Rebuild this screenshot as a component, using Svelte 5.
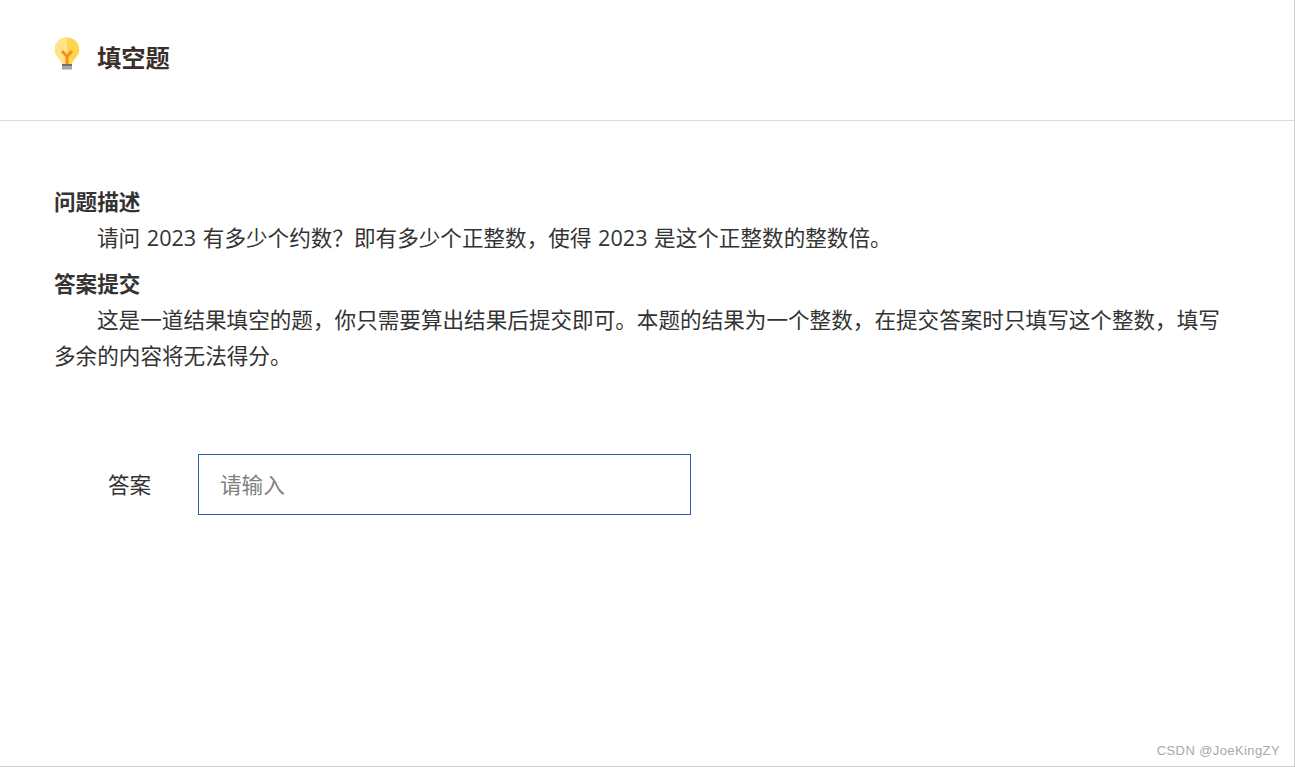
<script>
  let answer = $state("");
</script>

<div class="page">
  <header class="head">
    <svg class="bulb" width="26" height="36" viewBox="0 0 26 36" aria-hidden="true">
      <path d="M13 .5C6 .5.8 5.800.8 12.600c0 4.200 2.200 7.200 4.600 9.600 1.400 1.400 2.400 2.800 2.600 4.800h10c.2-2 1.200-3.400 2.600-4.800 2.400-2.400 4.600-5.400 4.600-9.600C25.200 5.800 20 .5 13 .5z" fill="#ffd54f"/>
      <path d="M13 .5C6 .5.8 5.800.8 12.600c0 4.200 2.200 7.200 4.600 9.600 1.400 1.400 2.400 2.800 2.600 4.800h5z" fill="#ffe28a"/>
      <path d="M8 14l5 5.500 5-5.500M13 19v8" fill="none" stroke="#fb8c1a" stroke-width="3"/>
      <rect x="8" y="27" width="10" height="2.500" fill="#6e6e6e"/>
      <rect x="8" y="29.500" width="10" height="3" fill="#a3a3a3"/>
    </svg>
    <h1>填空题</h1>
  </header>

  <main class="body">
    <section class="problem">
      <h2>问题描述</h2>
      <p>请问 2023 有多少个约数？即有多少个正整数，使得 2023 是这个正整数的整数倍。</p>
      <h2 class="second">答案提交</h2>
      <p>这是一道结果填空的题，你只需要算出结果后提交即可。本题的结果为一个整数，在提交答案时只填写这个整数，填写多余的内容将无法得分。</p>
    </section>

    <form class="answer">
      <label for="answer">答案</label>
      <input id="answer" placeholder="请输入" bind:value={answer} />
    </form>
  </main>

  <span class="mark">CSDN @JoeKingZY</span>
</div>

<style>
  :global(body) {
    background: #fff;
  }
  .page {
    position: relative;
    box-sizing: border-box;
    height: 767px;
    border-right: 1px solid #d0d0d0;
    border-bottom: 1px solid #d0d0d0;
    font-family: "Open Sans", "Noto Sans CJK SC", sans-serif;
    color: #333;
  }
  .head {
    box-sizing: border-box;
    height: 121px;
    padding: 37px 54px 0;
    display: flex;
    align-items: flex-start;
    gap: 17px;
    border-bottom: 1px solid #d9d9d9;
  }
  .bulb {
    flex: none;
  }
  h1 {
    margin: 3px 0 0;
    font-size: 24.3px;
    line-height: 36px;
    font-weight: 700;
    color: #3a2f2a;
  }
  .body {
    padding: 63px 54px 0;
    width: 1170px;
  }
  h2 {
    margin: 0;
    font-size: 21.6px;
    line-height: 36px;
    font-weight: 700;
    color: #333;
  }
  h2.second {
    margin-top: 10px;
  }
  p {
    margin: 0;
    font-size: 21.6px;
    line-height: 36px;
    text-indent: 43px;
    word-spacing: 1px;
    color: #333;
  }
  .answer {
    display: flex;
    align-items: center;
    margin-top: 80px;
    padding-left: 54px;
  }
  label {
    width: 90px;
    font-size: 21.6px;
    line-height: 36px;
    color: #333;
  }
  input {
    box-sizing: border-box;
    width: 493px;
    height: 61px;
    padding: 0 21px;
    border: 1px solid #1f63ad;
    border-radius: 0;
    outline: none;
    font: inherit;
    font-size: 21.6px;
    color: #333;
  }
  input::placeholder {
    color: #808080;
    opacity: 1;
  }
  .mark {
    position: absolute;
    right: 14px;
    bottom: 8px;
    font-family: "Liberation Sans", sans-serif;
    font-size: 13px;
    color: #a8a8a8;
    letter-spacing: 0.4px;
  }
</style>
